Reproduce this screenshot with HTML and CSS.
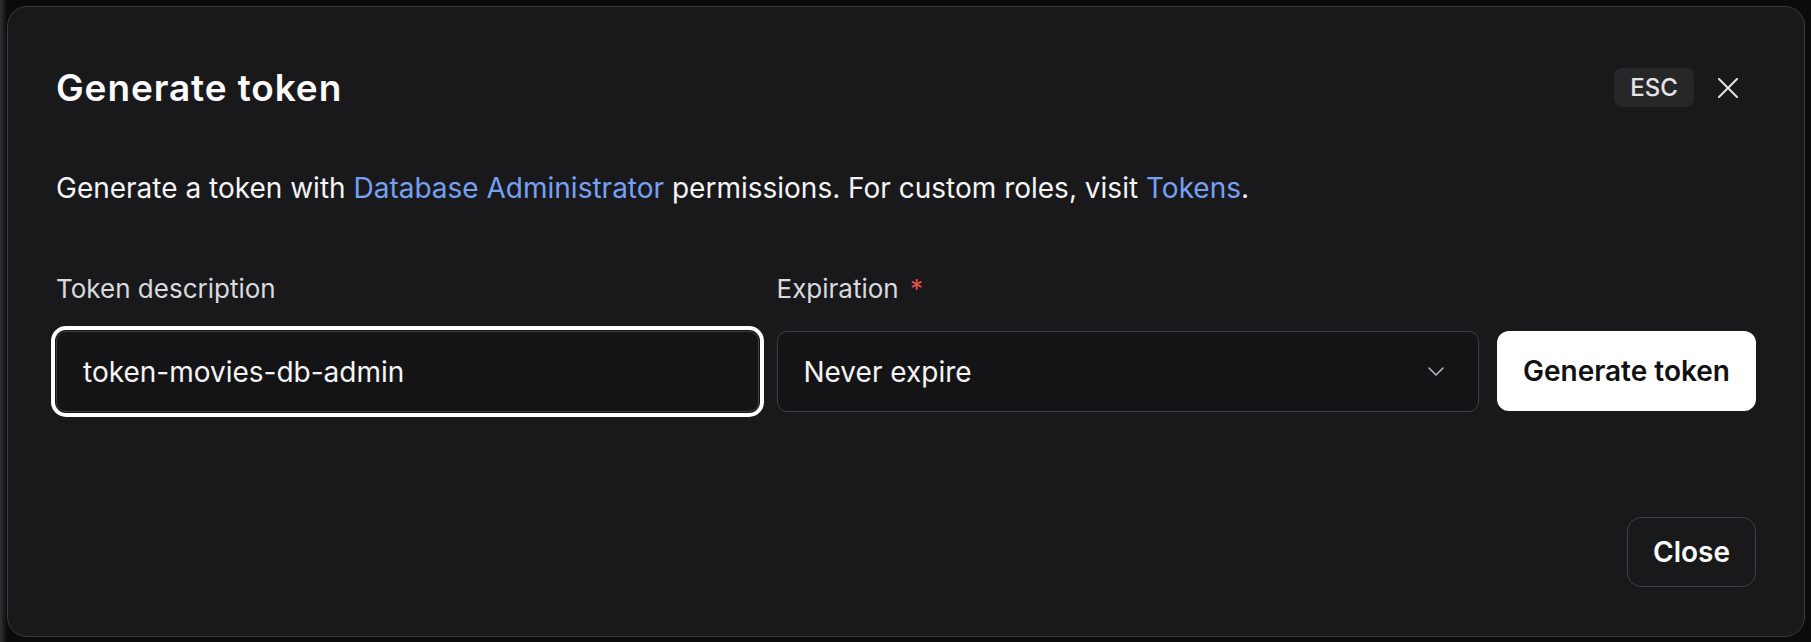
FILE: index.html
```html
<!DOCTYPE html>
<html lang="en">
<head>
<meta charset="utf-8">
<title>Generate token</title>
<link rel="stylesheet" href="styles.css">
</head>
<body>
<div class="backdrop">
  <div class="modal" role="dialog" aria-labelledby="dlg-title">
    <header class="modal-header">
      <h2 class="modal-title" id="dlg-title">Generate token</h2>
      <div class="header-actions">
        <span class="kbd">ESC</span>
        <button class="icon-btn" aria-label="Close">
          <svg width="20" height="20" viewBox="0 0 20 20" fill="none" stroke="currentColor" stroke-width="2" stroke-linecap="round">
            <path d="M1 1 L19 19 M19 1 L1 19"/>
          </svg>
        </button>
      </div>
    </header>
    <p class="modal-desc">Generate a token with <a class="link" href="#">Database Administrator</a> permissions. For custom roles, visit <a class="link" href="#">Tokens</a>.</p>
    <div class="fields">
      <label class="field-label" for="desc">Token description</label>
      <label class="field-label">Expiration <span class="req">*</span></label>
      <span></span>
      <input class="text-input" id="desc" type="text" value="token-movies-db-admin">
      <div class="select">
        <span class="select-value">Never expire</span>
        <svg class="chevron" width="16" height="9" viewBox="0 0 16 9" fill="none" stroke="currentColor" stroke-width="1.6" stroke-linecap="round" stroke-linejoin="round">
          <path d="M1 1 L8 8 L15 1"/>
        </svg>
      </div>
      <button class="btn btn-primary">Generate token</button>
    </div>
    <footer class="modal-footer">
      <button class="btn btn-outline">Close</button>
    </footer>
  </div>
</div>
</body>
</html>
```
FILE: styles.css
```css
* { box-sizing: border-box; }

html, body {
  margin: 0;
  height: 100%;
}

body {
  background: #0b0b0d;
  font-family: Inter, "Noto Sans", "Liberation Sans", sans-serif;
  color: #f4f4f5;
  overflow: hidden;
}

.backdrop {
  height: 100%;
  padding: 6px 6px 5px 7px;
  background:
    linear-gradient(90deg, rgba(120,120,125,0.35) 0px, rgba(20,20,22,0) 7px),
    #0b0b0d;
}

.modal {
  height: 100%;
  background: #19191b;
  border: 1px solid #3a3a3f;
  border-radius: 20px;
  padding: 61px 48px 49px 48px;
  display: flex;
  flex-direction: column;
}

.modal-header {
  display: flex;
  align-items: center;
  justify-content: space-between;
  height: 39px;
}

.modal-title {
  margin: 0;
  font-size: 37px;
  font-weight: 600;
  line-height: 39px;
  color: #fafafa;
  letter-spacing: 0.9px;
}

.header-actions {
  display: flex;
  align-items: center;
  gap: 24px;
  margin-right: 18px;
}

.kbd {
  display: inline-flex;
  align-items: center;
  justify-content: center;
  width: 80px;
  height: 39px;
  border-radius: 8px;
  background: #27272a;
  color: #e4e4e7;
  font-size: 24px;
  font-weight: 500;
}

.icon-btn {
  display: flex;
  padding: 0;
  border: 0;
  background: none;
  color: #e4e4e7;
  cursor: pointer;
}

.modal-desc {
  margin: 61px 0 0 0;
  font-size: 28px;
  line-height: 40px;
  color: #f4f4f5;
}

.link {
  color: #76a0f2;
  text-decoration: none;
}

.fields {
  margin-top: 65px;
  display: grid;
  grid-template-columns: 1fr 1fr 259px;
  column-gap: 18px;
  row-gap: 26px;
}

.field-label {
  font-size: 26px;
  line-height: 32px;
  color: #d9d9de;
}

.req {
  color: #e5534b;
  margin-left: 4px;
}

.text-input,
.select {
  height: 81px;
  border: 1.5px solid #3f3f46;
  border-radius: 10px;
  background: #141416;
  color: #f4f4f5;
  font-family: inherit;
  font-size: 28px;
  padding: 0 26px;
}

.text-input {
  outline: none;
  box-shadow: 0 0 0 1px #141416, 0 0 0 5px #ffffff;
}

.select {
  display: flex;
  align-items: center;
  justify-content: space-between;
  padding-right: 34px;
}

.chevron {
  color: #b4b4bb;
}

.btn {
  font-family: inherit;
  font-size: 28px;
  font-weight: 600;
  border-radius: 12px;
  cursor: pointer;
}

.btn-primary {
  height: 80px;
  padding: 0;
  background: #ffffff;
  color: #111113;
  border: 0;
}

.modal-footer {
  margin-top: auto;
  display: flex;
  justify-content: flex-end;
}

.btn-outline {
  height: 70px;
  padding: 0 25px;
  background: transparent;
  color: #fafafa;
  border: 1.5px solid #3f3f46;
  border-radius: 14px;
}
```
